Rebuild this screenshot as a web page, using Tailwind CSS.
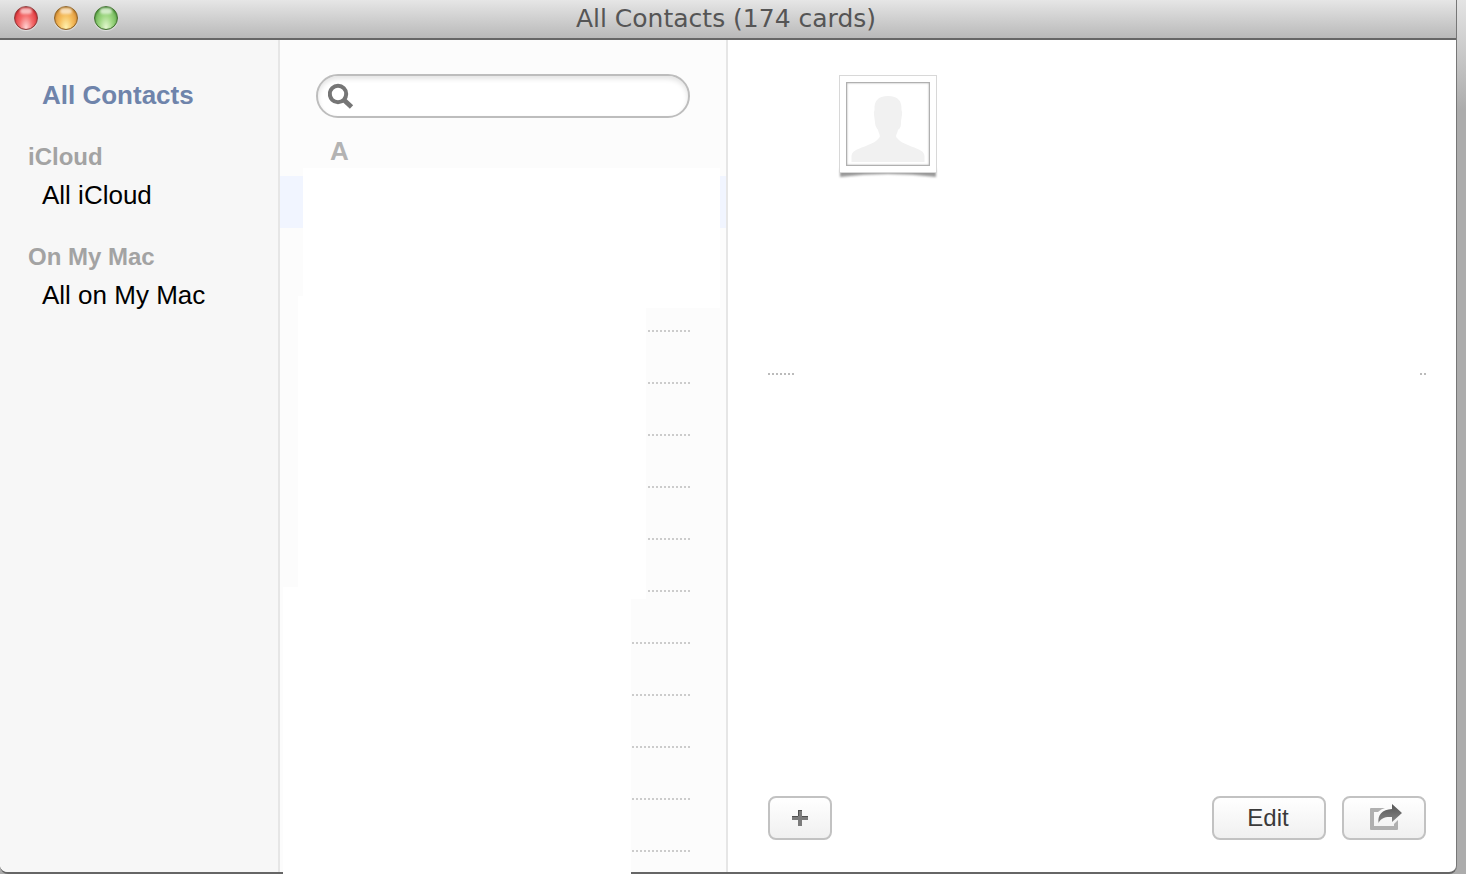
<!DOCTYPE html>
<html lang="en">
    <head>
        <meta charset="UTF-8" />
        <meta name="viewport" content="width=device-width, initial-scale=1.0" />
        <script src="https://cdn.jsdelivr.net/npm/@tailwindcss/browser@4"></script>

        <title>All Contacts</title>
    </head>
    <body class="h-screen overflow-hidden bg-[linear-gradient(#e4e4e4,#acacac_110px)] pr-[9px] font-['Liberation_Sans',Arial,sans-serif] text-black">
        <div class="flex h-full flex-col rounded-b-lg border-r border-b-2 border-r-[#777] border-b-[#666] bg-white">
            <header class="relative flex h-10 shrink-0 items-center justify-center border-b-2 border-[#666] bg-linear-to-b from-[#e6e6e6] to-[#b9b9b9] pr-1">
                <div class="absolute left-3.5 top-1.5 flex gap-4">
                    <button aria-label="Close" class="size-6 rounded-full border border-[#8c3a3a] bg-[radial-gradient(ellipse_at_50%_95%,#ffd4d4_0,#f46a6a_45%,#e23c42_80%)] shadow-[0_1px_1px_#fff8,inset_0_1px_2px_#7008]">
                        <span class="mx-auto -mt-2.5 block h-1.5 w-3 rounded-full bg-white/60 blur-[1px]"></span>
                    </button>
                    <button aria-label="Minimize" class="size-6 rounded-full border border-[#8f6226] bg-[radial-gradient(ellipse_at_50%_95%,#fff3b0_0,#f5bd5c_45%,#e29a40_80%)] shadow-[0_1px_1px_#fff8,inset_0_1px_2px_#6408]">
                        <span class="mx-auto -mt-2.5 block h-1.5 w-3 rounded-full bg-white/60 blur-[1px]"></span>
                    </button>
                    <button aria-label="Zoom" class="size-6 rounded-full border border-[#41702f] bg-[radial-gradient(ellipse_at_50%_95%,#e4f8d0_0,#9cd680_45%,#70b658_80%)] shadow-[0_1px_1px_#fff8,inset_0_1px_2px_#0408]">
                        <span class="mx-auto -mt-2.5 block h-1.5 w-3 rounded-full bg-white/60 blur-[1px]"></span>
                    </button>
                </div>
                <h1 class="font-['DejaVu_Sans',sans-serif] text-[25px] leading-9 text-[#555]">All Contacts (174 cards)</h1>
            </header>

            <main class="flex min-h-0 flex-1">
                <!-- Groups -->
                <nav class="flex w-[280px] shrink-0 flex-col gap-6 rounded-bl-lg border-r-2 border-[#e6e6e6] bg-[#f7f7f7] pt-9 text-[26px] leading-[38px]">
                    <a href="#" class="pl-[42px] font-bold text-[#6f84ab]">All Contacts</a>
                    <section>
                        <h2 class="pl-7 text-2xl leading-[38px] font-bold text-[#a3a3a3]">iCloud</h2>
                        <a href="#" class="block pl-[42px]">All iCloud</a>
                    </section>
                    <section>
                        <h2 class="pl-7 text-2xl leading-[38px] font-bold text-[#a3a3a3]">On My Mac</h2>
                        <a href="#" class="block pl-[42px]">All on My Mac</a>
                    </section>
                </nav>

                <!-- Contact list -->
                <section class="relative w-[448px] shrink-0 border-r-2 border-[#e6e6e6] bg-[#fcfcfc]">
                    <div class="flex h-full flex-col overflow-hidden">
                        <div class="px-9 pt-[34px]">
                            <label class="flex h-11 items-center rounded-full border-2 border-[#bdbdbd] bg-white pl-2.5 shadow-[inset_0_3px_5px_#0000001c]">
                                <svg class="size-7 shrink-0" viewBox="0 0 28 28" fill="none" stroke="#757575">
                                    <circle cx="10" cy="12" r="8.2" stroke-width="4" />
                                    <path d="M16 18 23.500 25" stroke-width="4.8" />
                                </svg>
                                <input type="search" aria-label="Search" class="h-full min-w-0 flex-1 bg-transparent px-2 text-2xl outline-none" />
                            </label>
                        </div>
                        <h2 class="shrink-0 pt-2 pl-[50px] text-[26px] leading-[50px] font-bold text-[#b3b3b3]">A</h2>
                        <ul id="contact-list"></ul>
                    </div>

                    <!-- Blanked out names -->
                    <div class="absolute top-32 right-1.5 left-[23px] h-[140px] bg-white"></div>
                    <div class="absolute top-64 right-20 left-[18px] h-[303px] bg-white"></div>
                    <div class="absolute top-[547px] right-[95px] -bottom-[3px] left-[3px] bg-white"></div>
                </section>

                <!-- Card -->
                <section class="flex min-w-0 flex-1 flex-col pt-[35px] pr-[30px] pb-8 pl-10">
                    <div class="relative ml-[71px] size-[98px]">
                        <svg class="absolute -bottom-1 left-0 h-2 w-full blur-[1px]" viewBox="0 0 98 8" preserveAspectRatio="none" fill="#999">
                            <path d="M1 0H97V8Q49 2 1 8Z" />
                        </svg>
                        <div class="relative size-full border border-[#d8d8d8] bg-white p-1.5">
                            <svg class="size-full border border-[#b0b0b0] shadow-[inset_0_0_2px_#0006]" viewBox="0 0 82 82" fill="#f1f1f1">
                                <path d="M41 13C31 13 27 18 27.500 27C26 31 28 35 28 40C28.500 44 30 45 31 47C32 51 34 53 32 55C30 58 26 60 21 62C12 66 5 67 4.500 73V79H77.500V73C77 67 70 66 61 62C56 60 52 58 50 55C48 53 50 51 51 47C53 45 54 44 54 40C54 35 56 31 54.500 27C55 18 51 13 41 13Z" />
                            </svg>
                        </div>
                    </div>

                    <div class="mt-50 flex h-0.5 justify-between">
                        <span class="w-[26px] bg-[repeating-linear-gradient(90deg,#bbb_0_2px,transparent_2px_4px)]"></span>
                        <span class="w-1.5 bg-[repeating-linear-gradient(90deg,#bbb_0_2px,transparent_2px_4px)]"></span>
                    </div>

                    <footer class="mt-auto flex gap-4">
                        <button aria-label="Add" class="mr-auto flex h-11 w-16 items-center justify-center rounded-lg border-2 border-[#c2c2c2] bg-linear-to-b from-white to-[#f0f0f0]">
                            <svg class="size-4" viewBox="0 0 16 16">
                                <path d="M6 0H10V6H16V10H10V16H6V10H0V6H6Z" fill="#7c7c7c" />
                                <path d="M6 0H10V1H7V6H6ZM0 6H6V7H0ZM10 6H16V7H10Z" fill="#505050" />
                            </svg>
                        </button>
                        <button class="h-11 w-[114px] rounded-lg border-2 border-[#c2c2c2] bg-linear-to-b from-white to-[#f0f0f0] pr-0.5 text-2xl leading-10 text-[#3a3a3a]">Edit</button>
                        <button aria-label="Share" class="flex h-11 w-21 items-center justify-center rounded-lg border-2 border-[#c2c2c2] bg-linear-to-b from-white to-[#f0f0f0] pl-1">
                            <svg class="h-7 w-8" viewBox="0 0 32 28">
                                <defs>
                                    <linearGradient id="arrow" x2="0" y2="1">
                                        <stop stop-color="#555" />
                                        <stop offset="1" stop-color="#888" />
                                    </linearGradient>
                                </defs>
                                <path d="M1 4H15Q11 5 8 8H4V22H24V20L28 16V25Q28 26 27 26H1Q0 26 0 25V5Q0 4 1 4Z" fill="#b0b0b0" />
                                <path d="M22 0 32 9 22 18V13C15 12.500 11 14 8.500 19C7.500 11 12 5.500 22 5Z" fill="url(#arrow)" />
                            </svg>
                        </button>
                    </footer>
                </section>
            </main>
        </div>

        <script>
            const ROW_COUNT = 14;
            const list = document.getElementById('contact-list');

            for (let i = 0; i < ROW_COUNT; i++) {
                const row = document.createElement('li');
                row.className = i === 0 ? 'h-[52px] bg-[#f1f5ff]' : 'flex h-[52px] items-end pr-9 pl-12';
                if (i > 0) {
                    row.innerHTML = '<span class="h-0.5 flex-1 bg-[repeating-linear-gradient(90deg,#ccc_0_2px,transparent_2px_4px)]"></span>';
                }
                list.appendChild(row);
            }
        </script>
    </body>
</html>
